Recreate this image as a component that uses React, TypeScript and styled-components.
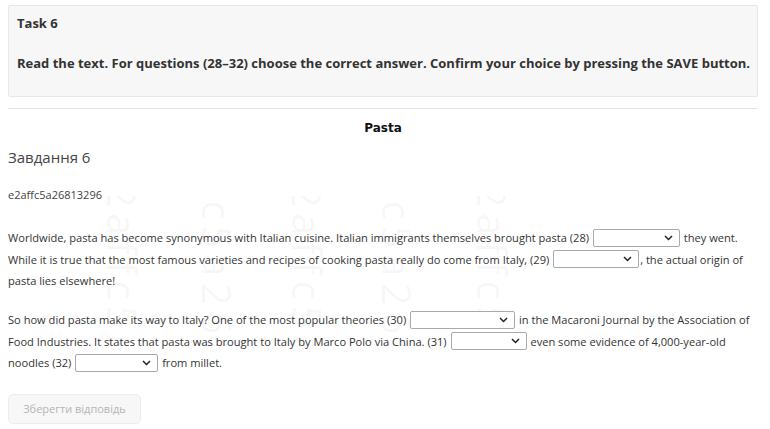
import React from "react";
import styled, { createGlobalStyle } from "styled-components";

const Global = createGlobalStyle`
  html, body { margin: 0; padding: 0; background: #fff; }
  body { font-family: "Open Sans", "Noto Sans", sans-serif; color: #333; }
`;

const Page = styled.div`
  position: relative;
  padding: 5px 12px 0 8px;
  overflow: hidden;
  height: 429px;
  box-sizing: border-box;
`;

const TaskBox = styled.div`
  background: #f7f7f7;
  border: 1px solid #e8e8e8;
  border-radius: 2px;
  padding: 8px 2px 0 8px;
  height: 92px;
  box-sizing: border-box;
`;

const TaskTitle = styled.div`
  font-weight: 700;
  font-size: 13px;
  line-height: 18px;
  color: #333;
`;

const TaskText = styled.div`
  font-weight: 700;
  font-size: 13px;
  line-height: 18px;
  color: #333;
  margin-top: 22px;
  white-space: nowrap;
`;

const Divider = styled.div`
  margin-top: 11px;
  height: 1px;
  background: #e4e4e4;
  box-shadow: 0 -2px 3px rgba(0, 0, 0, 0.03);
`;

const TextTitle = styled.div`
  text-align: center;
  font-family: "DejaVu Sans", Verdana, sans-serif;
  font-weight: 700;
  font-size: 12px;
  line-height: 16px;
  color: #111;
  margin-top: 11px;
`;

const Heading = styled.div`
  font-size: 15px;
  line-height: 22px;
  color: #444;
  margin-top: 10px;
`;

const Code = styled.div`
  font-size: 11px;
  line-height: 16px;
  color: #444;
  margin-top: 19px;
`;

const Para = styled.p`
  position: relative;
  z-index: 1;
  font-size: 11.1px;
  line-height: 21.5px;
  color: #333;
  margin: 0;
  & + & {
    margin-top: 17.5px;
  }
`;

const Body = styled.div`
  margin-top: 24px;
`;

const SelectBox = styled.span<{ $w: number }>`
  display: inline-flex;
  align-items: center;
  justify-content: flex-end;
  box-sizing: border-box;
  width: ${(p) => p.$w}px;
  height: 18px;
  vertical-align: middle;
  margin: -3px 1px 0 1px;
  border: 1px solid #a9a9a9;
  border-radius: 2px;
  background: #fff;
  padding-right: 6px;
`;

const Chevron = () => (
  <svg width="9" height="6" viewBox="0 0 9 6">
    <path d="M1 1l3.5 3.5L8 1" fill="none" stroke="#222" strokeWidth="1.5" />
  </svg>
);

const Select = ({ w }: { w: number }) => (
  <SelectBox $w={w}>
    <Chevron />
  </SelectBox>
);

const SaveButton = styled.button`
  margin-top: 20px;
  display: block;
  width: 133px;
  height: 30px;
  border: 1px solid #ececec;
  border-radius: 5px;
  background: #f7f7f7;
  color: #b5b5b5;
  font-family: "Open Sans", sans-serif;
  font-size: 11px;
  padding: 0;
`;

const Watermark = styled.div`
  position: absolute;
  left: 0;
  top: 196px;
  width: 100%;
  height: 150px;
  overflow: hidden;
  pointer-events: none;
  z-index: 0;
`;

const Mark = styled.span`
  position: absolute;
  font-family: "Open Sans", sans-serif;
  font-size: 40px;
  color: rgba(0, 0, 0, 0.045);
  white-space: nowrap;
  transform: rotate(90deg);
  transform-origin: left top;
  letter-spacing: 6px;
`;

export default function App() {
  const marks = [
    { x: 150, y: -40 },
    { x: 245, y: -120 },
    { x: 335, y: -40 },
    { x: 425, y: -120 },
    { x: 520, y: -40 },
  ];
  return (
    <>
      <Global />
      <Page>
        <Watermark>
          {marks.map((m, i) => (
            <Mark key={i} style={{ left: m.x, top: m.y }}>
              e2affc5a26813296
            </Mark>
          ))}
        </Watermark>
        <TaskBox>
          <TaskTitle>Task 6</TaskTitle>
          <TaskText>
            Read the text. For questions (28–32) choose the correct answer. Confirm your choice by
            pressing the SAVE button.
          </TaskText>
        </TaskBox>
        <Divider />
        <TextTitle>Pasta</TextTitle>
        <Heading>Завдання 6</Heading>
        <Code>e2affc5a26813296</Code>
        <Body>
          <Para>
            Worldwide, pasta has become synonymous with Italian cuisine. Italian immigrants
            themselves brought pasta (28) <Select w={87} /> they went. While it is true that the
            most famous varieties and recipes of cooking pasta really do come from Italy, (29){" "}
            <Select w={86} />, the actual origin of pasta lies elsewhere!
          </Para>
          <Para>
            So how did pasta make its way to Italy? One of the most popular theories (30){" "}
            <Select w={105} /> in the Macaroni Journal by the Association of Food Industries. It
            states that pasta was brought to Italy by Marco Polo via China. (31) <Select w={76} />{" "}
            even some evidence of 4,000-year-old noodles (32) <Select w={83} /> from millet.
          </Para>
        </Body>
        <SaveButton>Зберегти відповідь</SaveButton>
      </Page>
    </>
  );
}
